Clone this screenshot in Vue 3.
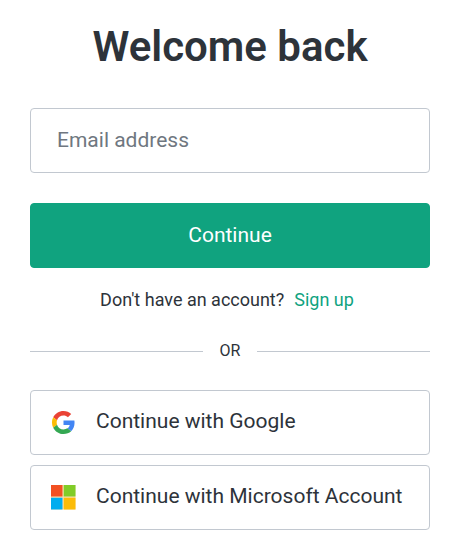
<template>
  <main class="login">
    <h1 class="title">Welcome back</h1>
    <form class="login-form" @submit.prevent>
      <input v-model="email" class="email" type="email" placeholder="Email address" aria-label="Email address">
      <button class="submit" type="submit">Continue</button>
    </form>
    <p class="signup">
      <span>Don't have an account?</span>
      <a href="#">Sign up</a>
    </p>
    <div class="divider"><span>OR</span></div>
    <div class="providers">
      <button class="provider" type="button">
        <svg class="icon" viewBox="-2 -2 52 52" aria-hidden="true">
          <path fill="#ea4335" d="M24 9.5c3.54 0 6.71 1.22 9.21 3.6l6.85-6.85C35.9 2.38 30.47 0 24 0 14.62 0 6.51 5.38 2.56 13.22l7.98 6.19C12.43 13.72 17.74 9.5 24 9.5z"/>
          <path fill="#4285f4" d="M46.98 24.55c0-1.57-.15-3.09-.38-4.55H24v9.02h12.94c-.58 2.96-2.26 5.48-4.78 7.18l7.73 6c4.51-4.18 7.09-10.36 7.09-17.65z"/>
          <path fill="#fbbc05" d="M10.53 28.59A14.5 14.5 0 0 1 9.77 24c0-1.6.28-3.14.76-4.59l-7.98-6.19A23.9 23.9 0 0 0 0 24c0 3.88.92 7.54 2.56 10.78z"/>
          <path fill="#34a853" d="M24 48c6.48 0 11.93-2.13 15.89-5.81l-7.73-6c-2.15 1.45-4.92 2.3-8.16 2.3-6.26 0-11.57-4.22-13.47-9.91l-7.98 6.19C6.51 42.62 14.62 48 24 48z"/>
        </svg>
        <span class="provider-name">Continue with Google</span>
      </button>
      <button class="provider" type="button">
        <svg class="icon" viewBox="0 0 25 25" aria-hidden="true">
          <path fill="#f9e0b0" d="M0 0h24.5v24.5H0z"/>
          <path fill="#f25022" d="M0 0h11.5v11.5H0z"/>
          <path fill="#80cc28" d="M12.7 0h11.8v11.5H12.7z"/>
          <path fill="#00adef" d="M0 12.7h11.5v11.8H0z"/>
          <path fill="#fbbc09" d="M12.7 12.7h11.8v11.8H12.7z"/>
        </svg>
        <span class="provider-name">Continue with Microsoft Account</span>
      </button>
    </div>
  </main>
</template>

<script setup>
import {ref} from 'vue';

const email = ref('');
</script>

<style>
body {
  background-color: #fff;
}
</style>

<style scoped>
.login {
  padding: 20px 31px 16px 30px;
  color: #2d333a;
  font-family: Roboto, "Liberation Sans", sans-serif;
}

.title {
  margin: 0 0 34px;
  font-size: 42px;
  font-weight: 600;
  line-height: 54px;
  text-align: center;
}

.login-form {
  display: flex;
  flex-direction: column;
  gap: 30px;
}

.email,
.submit,
.provider {
  box-sizing: border-box;
  width: 100%;
  height: 65px;
  border: 1px solid #c2c8d0;
  border-radius: 4px;
  background-color: #fff;
  color: #2d333a;
  font-family: inherit;
  font-size: 21px;
}

.email {
  padding: 0 26px 2px;
}

.email::placeholder {
  color: #6f7780;
  opacity: 1;
}

.submit {
  padding: 0 0 2px;
  border-color: #10a37f;
  background-color: #10a37f;
  color: #fff;
  cursor: pointer;
}

.signup {
  display: flex;
  justify-content: center;
  gap: 10px;
  margin: 20px 0 27px;
  padding-right: 6px;
  font-size: 18px;
  line-height: 24px;
}

.signup a {
  color: #10a37f;
  text-decoration: none;
}

.divider {
  display: flex;
  align-items: center;
  gap: 17px;
  font-size: 16px;
  line-height: 24px;
}

.divider::before,
.divider::after {
  content: "";
  flex: 1;
  height: 1px;
  background-color: #c2c8d0;
}

.providers {
  display: flex;
  flex-direction: column;
  gap: 10px;
  margin-top: 27px;
}

.provider {
  display: flex;
  align-items: center;
  gap: 20px;
  padding: 0 20px;
  text-align: left;
  cursor: pointer;
}

.provider-name {
  padding-bottom: 4px;
}

.icon {
  flex: none;
  width: 25px;
  height: 25px;
}
</style>
